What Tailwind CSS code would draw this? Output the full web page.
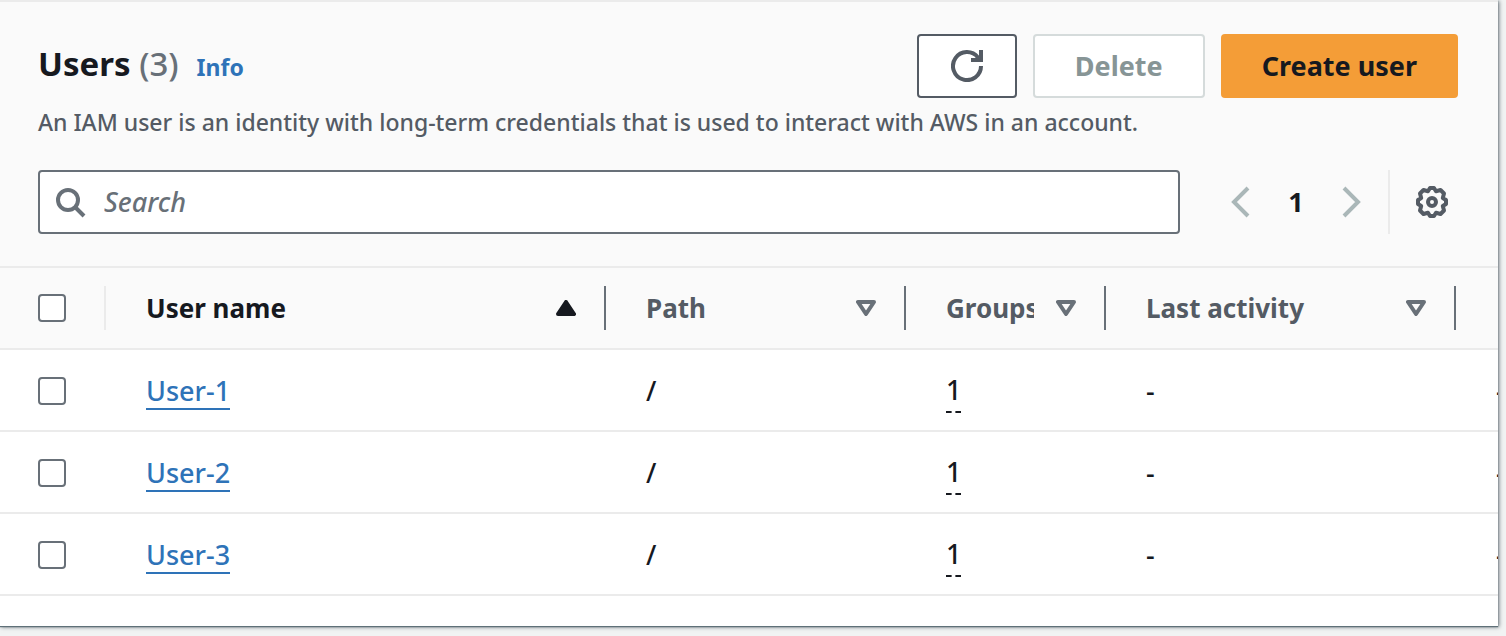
<!DOCTYPE html>
<html lang="en">
<head>
<meta charset="utf-8">
<meta name="viewport" content="width=device-width, initial-scale=1">
<title>Users</title>
<script src="https://cdn.jsdelivr.net/npm/@tailwindcss/browser@4"></script>
</head>
<body class="min-h-screen bg-[#f1f3f3] pr-2 font-['Noto_Sans',sans-serif] text-[#16191f]">
<main class="overflow-hidden border-t-2 border-[#ebebeb] bg-white pb-[30px] shadow-[0_1px_1px_#5f7078,1px_1px_4px_#687078]">
  <header class="flex flex-col border-b-2 border-[#ebebeb] bg-[#fafafa] pt-8 pr-10 pb-8 pl-[38px]">
    <div class="flex items-start justify-between gap-4">
      <div class="flex h-16 items-baseline gap-[18px] leading-[60px]">
        <h1 class="text-[33px] font-bold">Users <span class="font-medium text-[#687078]">(3)</span></h1>
        <a href="#" class="text-[23px] font-bold text-[#2e73b8]">Info</a>
      </div>
      <div class="flex gap-4">
        <button type="button" aria-label="Refresh" class="flex h-16 w-[100px] items-center justify-center rounded border-2 border-[#545b64] bg-white">
          <svg class="size-8" viewBox="0 0 16 16" fill="none" stroke="#545b64" stroke-width="2" aria-hidden="true"><path d="M10 5h5V0"/><path d="M15 8a7 7 0 1 1-1.500-4.300L14.500 5"/></svg>
        </button>
        <button type="button" disabled class="h-16 rounded border-2 border-[#d5dbdb] bg-white px-10 text-[27px] font-bold text-[#879596]">Delete</button>
        <button type="button" class="h-16 rounded bg-[#f49d37] px-[41px] text-[27px] font-bold">Create user</button>
      </div>
    </div>
    <p class="mt-1.5 text-[23px] leading-9 font-medium text-[#545b64]">An IAM user is an identity with long-term credentials that is used to interact with AWS in an account.</p>
    <div class="mt-[30px] flex h-16 items-stretch">
      <label class="flex grow items-center gap-4 rounded border-2 border-[#687078] bg-white px-4">
        <svg class="size-8 shrink-0" viewBox="0 0 32 32" fill="none" stroke="#687078" stroke-width="4" aria-hidden="true"><circle cx="12" cy="14" r="10"/><path d="M19 21l9 9"/></svg>
        <input type="search" aria-label="Search users" placeholder="Search" class="min-w-0 grow bg-transparent text-[27px] font-medium outline-none placeholder:text-[#687078] placeholder:italic">
      </label>
      <nav aria-label="Pagination" class="flex items-center pr-[26px] pl-[50px]">
        <button type="button" disabled aria-label="Previous page"><svg class="h-8 w-5" viewBox="0 0 20 32" fill="none" stroke="#aab7b8" stroke-width="4" aria-hidden="true"><path d="M18 2L4 16l14 14"/></svg></button>
        <button type="button" aria-current="page" class="w-[92px] text-[27px] font-bold">1</button>
        <button type="button" disabled aria-label="Next page"><svg class="h-8 w-5" viewBox="0 0 20 32" fill="none" stroke="#aab7b8" stroke-width="4" aria-hidden="true"><path d="M2 2l14 14L2 30"/></svg></button>
      </nav>
      <button type="button" aria-label="Preferences" class="border-l-2 border-[#ebebeb] pr-2.5 pl-[26px]">
        <svg class="size-8" viewBox="-16 -16 32 32" fill="none" stroke="#545b64" stroke-width="4" aria-hidden="true"><path stroke-linejoin="round" d="M-2 -14H2L4 -10.800L8.500 -12L12 -8.500L10.800 -4L14 -2V2L10.800 4L12 8.500L8.500 12L4 10.800L2 14H-2L-4 10.800L-8.500 12L-12 8.500L-10.800 4L-14 2V-2L-10.800 -4L-12 -8.500L-8.500 -12L-4 -10.800Z"/><circle r="4"/></svg>
      </button>
    </div>
  </header>
  <table class="w-full min-w-[1656px] table-fixed border-separate border-spacing-0 text-left text-[26px]">
    <colgroup><col class="w-[106px]"><col class="w-[500px]"><col class="w-[300px]"><col class="w-[200px]"><col class="w-[350px]"><col class="w-[200px]"></colgroup>
    <thead class="bg-[#fafafa] text-[#545b64]">
      <tr class="h-[82px] *:border-b-2 *:border-[#ebebeb]">
        <th class="p-0"><div class="flex h-11 items-center border-r-2 border-[#ebebeb] pl-[38px]"><input type="checkbox" aria-label="Select all users" class="size-7 appearance-none rounded border-2 border-[#687078] bg-white"></div></th>
        <th class="p-0" aria-sort="ascending"><div class="flex h-11 items-center justify-between border-r-2 border-[#687078] pr-7 pl-10 text-[#16191f]">User name<svg class="h-4 w-5" viewBox="0 0 20 16" aria-hidden="true"><path d="M10 2l8 12H2z" fill="#16191f" stroke="#16191f" stroke-width="4" stroke-linejoin="round"/></svg></div></th>
        <th class="p-0"><div class="flex h-11 items-center justify-between border-r-2 border-[#687078] pr-7 pl-10">Path<svg class="h-4 w-5" viewBox="0 0 20 16" aria-hidden="true"><path d="M2 2h16l-8 12z" fill="none" stroke="#687078" stroke-width="4" stroke-linejoin="round"/></svg></div></th>
        <th class="p-0"><div class="flex h-11 items-center justify-between gap-[22px] border-r-2 border-[#687078] pr-7 pl-10"><span class="min-w-0 overflow-hidden whitespace-nowrap">Groups</span><svg class="h-4 w-5 shrink-0" viewBox="0 0 20 16" aria-hidden="true"><path d="M2 2h16l-8 12z" fill="none" stroke="#687078" stroke-width="4" stroke-linejoin="round"/></svg></div></th>
        <th class="p-0"><div class="flex h-11 items-center justify-between border-r-2 border-[#687078] pr-7 pl-10">Last activity<svg class="h-4 w-5" viewBox="0 0 20 16" aria-hidden="true"><path d="M2 2h16l-8 12z" fill="none" stroke="#687078" stroke-width="4" stroke-linejoin="round"/></svg></div></th>
        <th class="p-0"></th>
      </tr>
    </thead>
    <tbody class="text-[27px] font-medium">
      <tr class="h-[82px] *:border-b-2 *:border-[#ebebeb] *:pt-0.5">
        <td class="pl-[38px]"><input type="checkbox" aria-label="Select User-1" class="block size-7 appearance-none rounded border-2 border-[#687078]"></td>
        <td class="pl-10"><a href="#" class="inline-block border-b-2 border-[#2e73b8] leading-[34px] text-[#2e73b8]">User-1</a></td>
        <td class="pl-10">/</td>
        <td class="pl-10"><span class="inline-block border-b-2 border-dashed border-[#16191f] leading-[42px]">1</span></td>
        <td class="pl-10">-</td>
        <td class="pl-10">-</td>
      </tr>
      <tr class="h-[82px] *:border-b-2 *:border-[#ebebeb] *:pt-0.5">
        <td class="pl-[38px]"><input type="checkbox" aria-label="Select User-2" class="block size-7 appearance-none rounded border-2 border-[#687078]"></td>
        <td class="pl-10"><a href="#" class="inline-block border-b-2 border-[#2e73b8] leading-[34px] text-[#2e73b8]">User-2</a></td>
        <td class="pl-10">/</td>
        <td class="pl-10"><span class="inline-block border-b-2 border-dashed border-[#16191f] leading-[42px]">1</span></td>
        <td class="pl-10">-</td>
        <td class="pl-10">-</td>
      </tr>
      <tr class="h-[82px] *:border-b-2 *:border-[#ebebeb] *:pt-0.5">
        <td class="pl-[38px]"><input type="checkbox" aria-label="Select User-3" class="block size-7 appearance-none rounded border-2 border-[#687078]"></td>
        <td class="pl-10"><a href="#" class="inline-block border-b-2 border-[#2e73b8] leading-[34px] text-[#2e73b8]">User-3</a></td>
        <td class="pl-10">/</td>
        <td class="pl-10"><span class="inline-block border-b-2 border-dashed border-[#16191f] leading-[42px]">1</span></td>
        <td class="pl-10">-</td>
        <td class="pl-10">-</td>
      </tr>
    </tbody>
  </table>
</main>
</body>
</html>
